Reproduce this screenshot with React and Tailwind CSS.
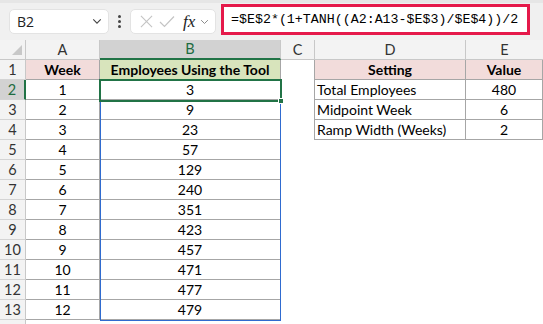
import React from 'react'

const weeks = [
  [1, 3], [2, 9], [3, 23], [4, 57], [5, 129], [6, 240],
  [7, 351], [8, 423], [9, 457], [10, 471], [11, 477], [12, 479],
]

const settings = [
  ['Total Employees', 480],
  ['Midpoint Week', 6],
  ['Ramp Width (Weeks)', 2],
]

const Chevron = ({ className }) => (
  <svg viewBox="0 0 12 8" className={className} fill="none" stroke="currentColor" strokeWidth="1.3">
    <path d="M1.5 1.5 L6 6 L10.5 1.5" />
  </svg>
)

const RowHead = ({ n, active }) => (
  <div
    className={`h-[20px] flex items-center justify-center text-[14.5px] border-b border-[#d4d4d4] ${
      active ? 'bg-[#d2d2d2] text-[#1e6c41] border-r-2 border-r-[#217346]' : 'bg-[#f3f3f3] text-[#333] border-r border-r-[#c8c8c8]'
    }`}
  >
    {n}
  </div>
)

const App = () => {
  return (
    <div className="w-[543px] h-[324px] overflow-hidden bg-white relative font-['Lato','Noto_Sans',sans-serif] text-black">
      {/* formula bar */}
      <div className="h-[40px] bg-[#f0f0f0] border-t-[3px] border-[#e6e6e6] flex items-start">
        <div className="ml-[9px] mt-[6px] w-[100px] h-[25px] bg-white rounded-[5px] border border-[#e3e3e3] flex items-center pl-[7px] pr-[6px] justify-between">
          <span className="text-[14px] font-['Open_Sans',sans-serif] text-[#222]">B2</span>
          <Chevron className="w-[10px] h-[7px] text-[#444]" />
        </div>
        <div className="w-[21px] h-[31px] flex flex-col items-center justify-center gap-[2px] mt-[3px]">
          <span className="w-[3px] h-[3px] rounded-full bg-[#444]" />
          <span className="w-[3px] h-[3px] rounded-full bg-[#444]" />
          <span className="w-[3px] h-[3px] rounded-full bg-[#444]" />
        </div>
        <div className="mt-[6px] w-[86px] h-[25px] bg-white rounded-[5px] border border-[#e3e3e3] flex items-center pl-[9px]">
          <svg viewBox="0 0 14 14" className="w-[13px] h-[13px]" stroke="#c4c4c4" strokeWidth="1.2">
            <path d="M1 1 L13 13 M13 1 L1 13" />
          </svg>
          <svg viewBox="0 0 16 13" className="w-[16px] h-[13px] ml-[6px]" fill="none" stroke="#c4c4c4" strokeWidth="1.2">
            <path d="M1 7 L5.5 11.5 L15 1.5" />
          </svg>
          <span className="ml-[8px] text-[17px] italic font-['Liberation_Serif',serif] text-[#222] leading-none">fx</span>
          <Chevron className="ml-[5px] w-[9px] h-[6px] text-[#888]" />
        </div>
        <div className="ml-[5px] mt-[1px] w-[309px] h-[31px] bg-white border-[3px] border-[#e5194a] flex items-center pl-[7px]">
          <span className="text-[13.3px] font-['Liberation_Mono',monospace] text-black whitespace-nowrap">
            =$E$2*(1+TANH((A2:A13-$E$3)/$E$4))/2
          </span>
        </div>
      </div>

      {/* sheet */}
      <div className="relative grid grid-cols-[26px_74px_181px_34px_151px_77px] text-[14px]">
        {/* column headers */}
        <div className="h-[20px] bg-[#f3f3f3] border-r border-b border-[#c8c8c8] relative">
          <svg viewBox="0 0 10 10" className="absolute left-[12px] top-[5px] w-[10px] h-[10px]">
            <path d="M10 0 L10 10 L0 10 Z" fill="#c8c8c8" />
          </svg>
        </div>
        <div className="h-[20px] bg-[#f3f3f3] border-r border-b border-[#c8c8c8] flex items-center justify-center text-[14.5px] text-[#333]">A</div>
        <div className="h-[20px] bg-[#d2d2d2] border-r border-[#c8c8c8] border-b-2 border-b-[#217346] flex items-center justify-center text-[14.5px] text-[#1e6c41]">B</div>
        <div className="h-[20px] bg-[#f3f3f3] border-r border-b border-[#c8c8c8] flex items-center justify-center text-[14.5px] text-[#333]">C</div>
        <div className="h-[20px] bg-[#f3f3f3] border-r border-b border-[#c8c8c8] flex items-center justify-center text-[14.5px] text-[#333]">D</div>
        <div className="h-[20px] bg-[#f3f3f3] border-b border-[#c8c8c8] flex items-center justify-center text-[14.5px] text-[#333]">E</div>

        {/* row 1 */}
        <RowHead n={1} />
        <div className="h-[20px] bg-[#f2dcdb] border-r border-b border-[#a6a6a6] flex items-center justify-center font-bold">Week</div>
        <div className="h-[20px] bg-[#d8e4bc] border-r border-b border-[#a6a6a6] flex items-center justify-center font-bold whitespace-nowrap">Employees Using the Tool</div>
        <div className="h-[20px] border-r border-[#a6a6a6]" />
        <div className="h-[20px] bg-[#f2dcdb] border-r border-b border-[#a6a6a6] flex items-center justify-center font-bold">Setting</div>
        <div className="h-[20px] bg-[#f2dcdb] border-r border-b border-[#a6a6a6] flex items-center justify-center font-bold">Value</div>

        {weeks.map(([w, v], i) => {
          const s = settings[i]
          return (
            <React.Fragment key={w}>
              <RowHead n={i + 2} active={i === 0} />
              <div className="h-[20px] border-r border-b border-[#a6a6a6] flex items-center justify-center">{w}</div>
              <div className="h-[20px] border-r border-b border-[#a6a6a6] flex items-center justify-center">{v}</div>
              <div className={`h-[20px] ${s ? 'border-r border-[#a6a6a6]' : ''}`} />
              {s ? (
                <>
                  <div className="h-[20px] border-r border-b border-[#a6a6a6] flex items-center pl-[2px] whitespace-nowrap">{s[0]}</div>
                  <div className="h-[20px] border-r border-b border-[#a6a6a6] flex items-center justify-center">{s[1]}</div>
                </>
              ) : (
                <>
                  <div className="h-[20px]" />
                  <div className="h-[20px]" />
                </>
              )}
            </React.Fragment>
          )
        })}
        <RowHead n="" />

        {/* spill range outline */}
        <div className="absolute left-[100px] top-[40px] w-[181px] h-[241px] border border-[#2f6bd0] pointer-events-none" />
        {/* active cell */}
        <div className="absolute left-[99px] top-[39px] w-[183px] h-[23px] border-2 border-[#217346] pointer-events-none" />
        <div className="absolute left-[278px] top-[58px] w-[6px] h-[6px] bg-[#217346] border border-white pointer-events-none" />
      </div>
    </div>
  )
}

export default App
